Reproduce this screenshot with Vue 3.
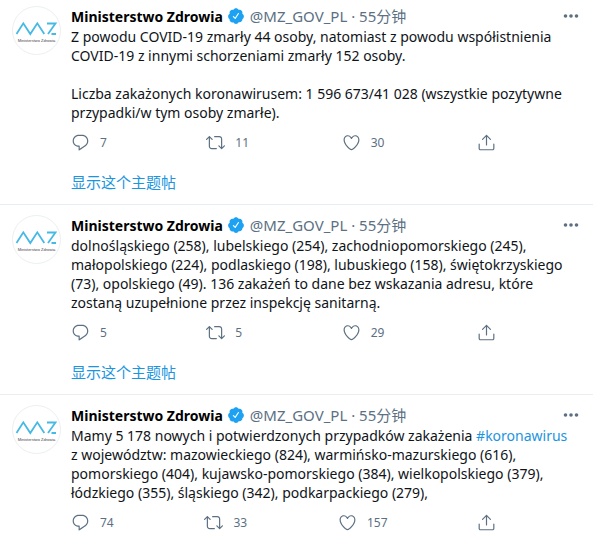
<script setup>
const replyPath = 'M14.046 2.242l-4.148-.01h-.002c-4.374 0-7.8 3.427-7.8 7.802 0 4.098 3.186 7.206 7.465 7.37v3.828c0 .108.044.286.12.403.142.225.384.347.632.347.138 0 .277-.038.402-.118.264-.168 6.473-4.14 8.088-5.506 1.902-1.61 3.04-3.97 3.043-6.312v-.017c-.006-4.367-3.43-7.787-7.8-7.788zm3.787 12.972c-1.134.96-4.862 3.405-6.772 4.643V16.67c0-.414-.335-.75-.75-.75h-.396c-3.66 0-6.318-2.476-6.318-5.886 0-3.534 2.768-6.302 6.3-6.302l4.147.01h.002c3.532 0 6.3 2.766 6.302 6.296-.003 1.91-.942 3.844-2.514 5.176z'
const retweetPath = 'M23.77 15.67c-.292-.293-.767-.293-1.06 0l-2.22 2.22V7.65c0-2.068-1.683-3.75-3.75-3.75h-5.85c-.414 0-.75.336-.75.75s.336.75.75.75h5.85c1.24 0 2.25 1.01 2.25 2.25v10.24l-2.22-2.22c-.293-.293-.768-.293-1.06 0s-.294.768 0 1.06l3.5 3.5c.145.147.337.22.53.22s.383-.072.53-.22l3.5-3.5c.294-.292.294-.767 0-1.06zm-10.66 3.28H7.26c-1.24 0-2.25-1.01-2.25-2.25V6.46l2.22 2.22c.148.147.34.22.532.22s.384-.073.53-.22c.293-.293.293-.768 0-1.06l-3.5-3.5c-.293-.294-.768-.294-1.06 0l-3.5 3.5c-.294.292-.294.767 0 1.06s.767.293 1.06 0l2.22-2.22V16.7c0 2.068 1.683 3.75 3.75 3.75h5.85c.414 0 .75-.336.75-.75s-.337-.75-.75-.75z'
const likePath = 'M12 21.638h-.014C9.403 21.59 1.95 14.856 1.95 8.478c0-3.064 2.525-5.754 5.403-5.754 2.29 0 3.83 1.58 4.646 2.73.814-1.148 2.354-2.73 4.645-2.73 2.88 0 5.404 2.69 5.404 5.755 0 6.376-7.454 13.11-10.037 13.157H12zM7.354 4.225c-2.08 0-3.903 1.988-3.903 4.255 0 5.74 7.034 11.596 8.55 11.658 1.518-.062 8.55-5.917 8.55-11.658 0-2.267-1.823-4.255-3.903-4.255-2.528 0-3.94 2.936-3.952 2.965-.23.562-1.156.562-1.387 0-.014-.03-1.425-2.965-3.954-2.965z'
const sharePath = 'M17.53 7.47l-5-5c-.293-.293-.768-.293-1.06 0l-5 5c-.294.293-.294.768 0 1.06s.767.294 1.06 0l3.72-3.72V15c0 .414.336.75.75.75s.75-.336.75-.75V4.81l3.72 3.72c.146.147.338.22.53.22s.384-.072.53-.22c.293-.293.293-.767 0-1.06zM19.708 21.944H4.292C3.028 21.944 2 20.916 2 19.652V14c0-.414.336-.75.75-.75s.75.336.75.75v5.652c0 .437.355.792.792.792h15.416c.437 0 .792-.355.792-.792V14c0-.414.336-.75.75-.75s.75.336.75.75v5.652c0 1.264-1.028 2.292-2.292 2.292z'
const verifiedPath = 'M22.5 12.5c0-1.58-.875-2.95-2.148-3.6.154-.435.238-.905.238-1.4 0-2.21-1.71-3.998-3.818-3.998-.47 0-.92.084-1.336.25C14.818 2.415 13.51 1.5 12 1.5s-2.816.917-3.437 2.25c-.415-.165-.866-.25-1.336-.25-2.11 0-3.818 1.79-3.818 4 0 .494.083.964.237 1.4-1.272.65-2.147 2.018-2.147 3.6 0 1.495.782 2.798 1.942 3.486-.02.17-.032.34-.032.514 0 2.21 1.708 4 3.818 4 .47 0 .92-.086 1.335-.25.62 1.334 1.926 2.25 3.437 2.25 1.512 0 2.818-.916 3.437-2.25.415.163.865.248 1.336.248 2.11 0 3.818-1.79 3.818-4 0-.174-.012-.344-.033-.513 1.158-.687 1.943-1.99 1.943-3.484zm-6.616-3.334l-4.334 6.5c-.145.217-.382.334-.625.334-.143 0-.288-.04-.416-.126l-.115-.094-2.415-2.415c-.293-.293-.293-.768 0-1.06s.768-.294 1.06 0l1.77 1.767 3.825-5.74c.23-.345.696-.436 1.04-.207.346.23.44.696.21 1.04z'

const tweets = [
  {
    id: 1,
    text: [
      {
        value:
          'Z powodu COVID-19 zmarły 44 osoby, natomiast z powodu współistnienia\nCOVID-19 z innymi schorzeniami zmarły 152 osoby.\n\nLiczba zakażonych koronawirusem: 1 596 673/41 028 (wszystkie pozytywne\nprzypadki/w tym osoby zmarłe).',
      },
    ],
    counts: [7, 11, 30],
    thread: true,
  },
  {
    id: 2,
    text: [
      {
        value:
          'dolnośląskiego (258), lubelskiego (254), zachodniopomorskiego (245),\nmałopolskiego (224), podlaskiego (198), lubuskiego (158), świętokrzyskiego\n(73), opolskiego (49). 136 zakażeń to dane bez wskazania adresu, które\nzostaną uzupełnione przez inspekcję sanitarną.',
      },
    ],
    counts: [5, 5, 29],
    thread: true,
  },
  {
    id: 3,
    text: [
      { value: 'Mamy 5 178 nowych i potwierdzonych przypadków zakażenia ' },
      { value: '#koronawirus', tag: true },
      {
        value:
          '\nz województw: mazowieckiego (824), warmińsko-mazurskiego (616),\npomorskiego (404), kujawsko-pomorskiego (384), wielkopolskiego (379),\nłódzkiego (355), śląskiego (342), podkarpackiego (279),',
      },
    ],
    counts: [74, 33, 157],
    thread: false,
  },
]

const actions = [replyPath, retweetPath, likePath]
</script>

<template>
  <main class="timeline">
    <article v-for="tweet in tweets" :key="tweet.id" class="tweet">
      <a class="avatar" href="#">
        <svg viewBox="0 0 49 49">
          <circle cx="24.5" cy="24.5" r="24" fill="#fff" stroke="#ebeef0" />
          <path
            d="M4.500 28L11.300 17.300L18.300 28L25.300 17.300L32.300 28M35 17.500H43.500L36 28M39.500 28H44"
            fill="none"
            stroke="#46b9e4"
            stroke-width="1.800"
          />
          <text x="24.500" y="35.500" text-anchor="middle" class="logo-text">Ministerstwo Zdrowia</text>
        </svg>
      </a>
      <div class="content">
        <header class="head">
          <a class="name" href="#">Ministerstwo Zdrowia</a>
          <svg class="verified" viewBox="0 0 24 24"><path :d="verifiedPath" /></svg>
          <span class="meta">@MZ_GOV_PL · 55分钟</span>
          <button class="more" type="button">
            <svg viewBox="0 0 16 6">
              <circle cx="2.500" cy="3" r="1.800" />
              <circle cx="8" cy="3" r="1.800" />
              <circle cx="13.500" cy="3" r="1.800" />
            </svg>
          </button>
        </header>
        <p class="text"><template v-for="part in tweet.text" :key="part.value"><a v-if="part.tag" href="#">{{ part.value }}</a><template v-else>{{ part.value }}</template></template></p>
        <div class="actions">
          <button v-for="(path, i) in actions" :key="i" class="action" type="button">
            <svg viewBox="0 0 24 24"><path :d="path" /></svg>
            <span class="count">{{ tweet.counts[i] }}</span>
          </button>
          <button class="action" type="button">
            <svg viewBox="0 0 24 24"><path :d="sharePath" /></svg>
          </button>
        </div>
        <a v-if="tweet.thread" class="thread" href="#">显示这个主题帖</a>
      </div>
    </article>
  </main>
</template>

<style>
body {
  margin: 0;
  background: #fff;
}
</style>

<style scoped>
.timeline {
  font-family: 'Noto Sans', 'Noto Sans CJK SC', sans-serif;
  font-size: 14px;
  line-height: 19px;
  color: #0f1419;
}
.tweet {
  display: flex;
  gap: 10px;
  padding: 10px 14px 12px 12px;
  border-bottom: 1px solid #ebeef0;
}
.tweet:first-child {
  padding-top: 6px;
}
.tweet:last-child {
  border-bottom: 0;
}
a {
  color: #1b95e0;
  text-decoration: none;
}
button {
  padding: 0;
  border: 0;
  background: none;
  font: inherit;
  color: #5b7083;
  cursor: pointer;
}
svg {
  display: block;
  fill: currentColor;
}
.avatar {
  flex: none;
  width: 49px;
  height: 49px;
}
.logo-text {
  font-family: 'Liberation Sans', sans-serif;
  font-size: 4px;
  fill: #444;
}
.content {
  flex: 1;
  min-width: 0;
}
.head {
  display: flex;
  align-items: center;
  height: 20px;
  white-space: nowrap;
}
.name {
  font-weight: 700;
  color: #000;
}
.verified {
  width: 18px;
  height: 18px;
  margin: 0 5px 0 4px;
  color: #1da1f2;
}
.meta {
  font-size: 15px;
  color: #5b7083;
}
.more {
  margin-left: auto;
}
.more svg {
  width: 16px;
  height: 6px;
}
.text {
  margin: 1px 0 0;
  white-space: pre;
}
.actions {
  display: flex;
  justify-content: space-between;
  max-width: 425px;
  height: 20px;
  margin-top: 10px;
}
.action {
  display: flex;
  align-items: center;
  gap: 10px;
}
.action svg {
  width: 19px;
  height: 19px;
}
.count {
  min-width: 15px;
  font-size: 12px;
  text-align: left;
}
.thread {
  display: block;
  width: fit-content;
  margin-top: 20px;
  font-size: 15px;
  line-height: 20px;
}
</style>
